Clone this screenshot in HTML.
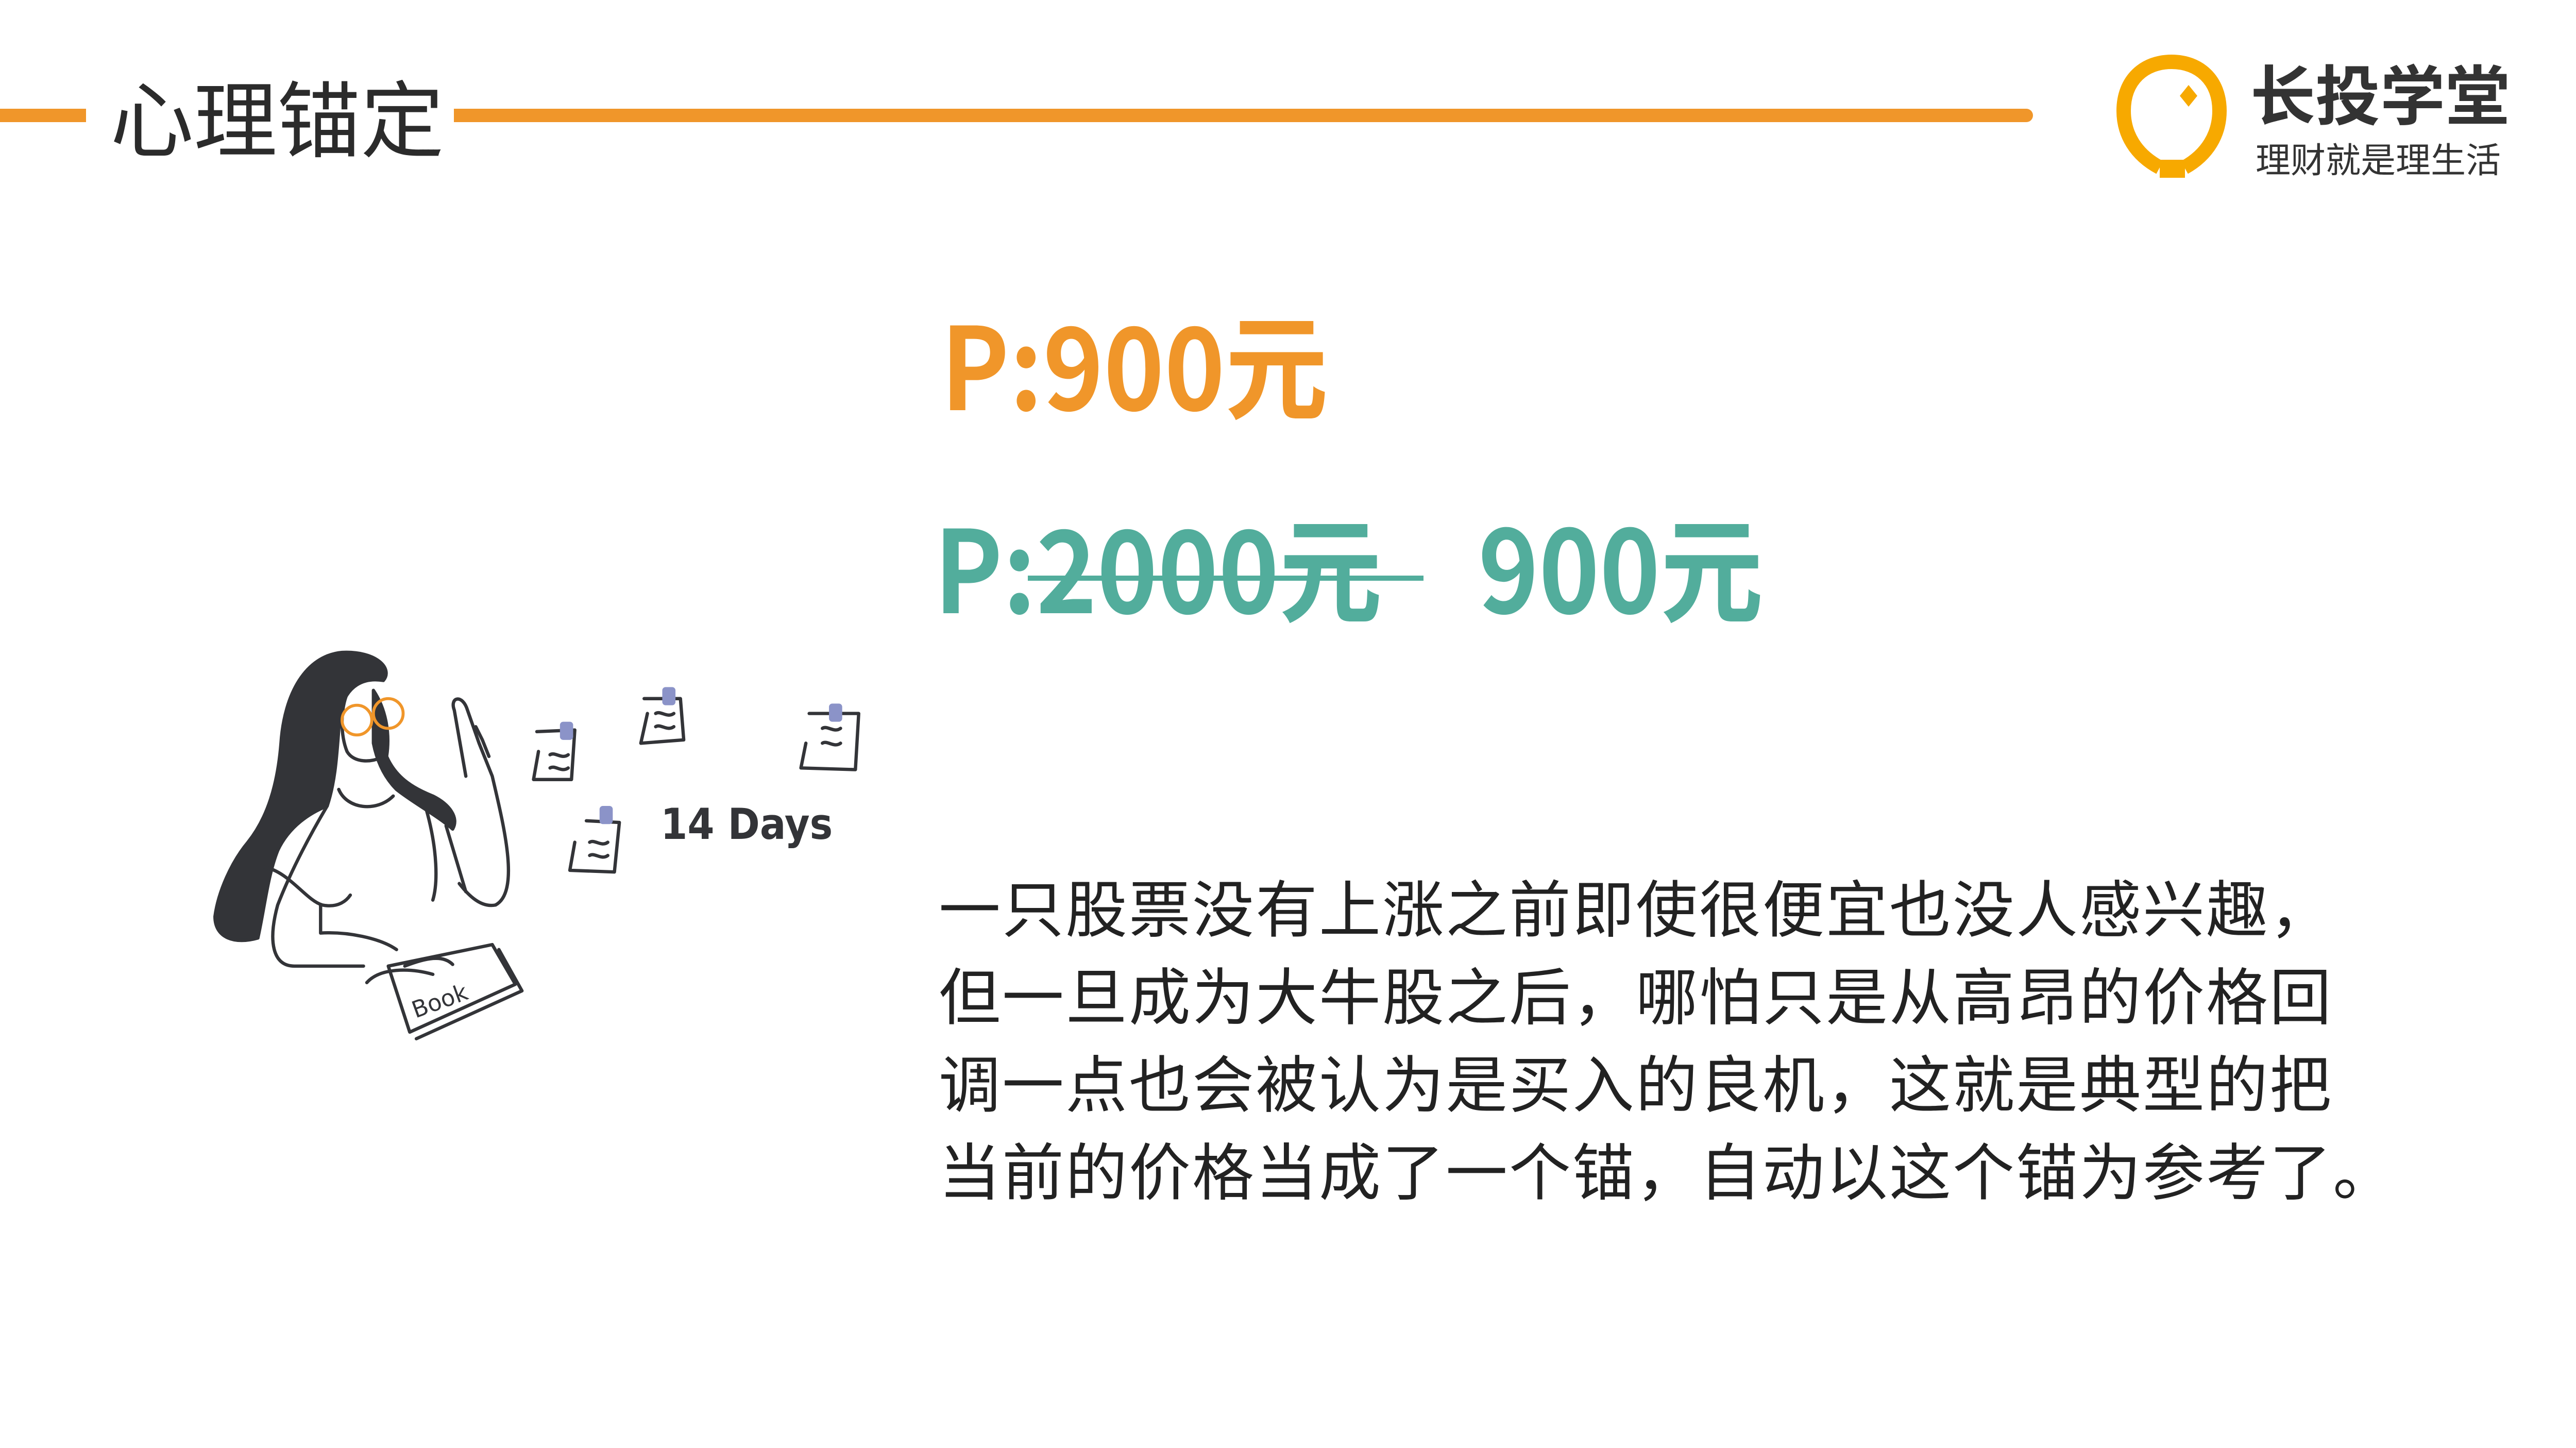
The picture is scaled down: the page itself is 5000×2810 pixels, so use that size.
<!DOCTYPE html>
<html><head><meta charset="utf-8">
<style>
html,body{margin:0;padding:0;background:#fff;}
body{width:5000px;height:2810px;position:relative;overflow:hidden;font-family:"Liberation Sans","Noto Sans CJK SC",sans-serif;}
.abs{position:absolute;white-space:nowrap;}
.bar{position:absolute;background:#f0962a;}
.price{font-size:222px;line-height:260px;font-weight:bold;font-family:'Noto Sans CJK SC',sans-serif;transform:scaleX(0.9);transform-origin:0 0;}
</style></head><body>
<div class="bar" style="left:0;top:211px;width:167px;height:26px;"></div>
<div class="bar" style="left:881px;top:211px;width:3065px;height:26px;border-radius:0 13px 13px 0;"></div>
<div class="abs" style="left:214px;top:124px;font-size:162px;line-height:195px;color:#2b2b2b;font-family:'Noto Sans CJK SC',sans-serif;">心理锚定</div>

<!-- logo -->
<svg class="abs" style="left:4100px;top:100px" width="240" height="250" viewBox="0 0 240 250">
<path d="M92 225 C45 200 22 160 22 115 C22 55 62 20 115 20 C168 20 208 55 208 115 C208 160 185 200 140 225" fill="none" stroke="#f7a900" stroke-width="28"/>
<path d="M92 210 L92 245 L141 245 L141 210 Z" fill="#f7a900"/>
<path d="M148 65 L165 86 L148 107 L131 86 Z" fill="#f7a900"/>
</svg>
<div class="abs" style="left:4368px;top:103px;font-size:126px;line-height:150px;font-weight:bold;color:#333;font-family:'Noto Sans CJK SC',sans-serif;">长投学堂</div>
<div class="abs" style="left:4378px;top:266px;font-size:68px;line-height:80px;color:#333;font-family:'Noto Sans CJK SC',sans-serif;">理财就是理生活</div>

<!-- prices -->
<div class="abs price" style="left:1826px;top:569px;color:#f0962a;">P:900元</div>
<div class="abs price" style="left:1813px;top:963px;color:#52ad9c;">P:2000元</div>
<div class="abs" style="left:1995px;top:1117px;width:768px;height:10px;background:#52ad9c;"></div>
<div class="abs price" style="left:2869px;top:963px;color:#52ad9c;">900元</div>

<!-- paragraph -->
<div class="abs" style="left:1822px;top:1671px;font-size:120px;line-height:170px;color:#222;font-family:'Noto Sans CJK SC',sans-serif;letter-spacing:3px;">一只股票没有上涨之前即使很便宜也没人感兴趣，<br>但一旦成为大牛股之后，哪怕只是从高昂的价格回<br>调一点也会被认为是买入的良机，这就是典型的把<br>当前的价格当成了一个锚，自动以这个锚为参考了。</div>

<!-- illustration -->
<svg class="abs" style="left:385px;top:1218px" width="1346" height="833" viewBox="120 380 420 260">
<g fill="none" stroke="#333438" stroke-width="2" stroke-linecap="round" stroke-linejoin="round">
<path d="M207 395 C185 397 172 420 170 450 C168 475 162 495 150 510 C140 522 132 540 130 555 C130 568 142 572 156 568 C160 550 162 530 168 515 C175 500 188 492 198 488 C204 470 204 450 206 430 C210 415 220 410 232 412 C238 405 228 394 207 395 Z" fill="#333438"/>
<path d="M226 418 C234 430 236 445 234 458 C240 472 252 478 262 482 C272 487 278 495 274 502 C265 494 250 486 240 478 C232 470 228 460 226 450 Z" fill="#333438"/>
<path d="M210 420 C206 430 206 445 210 455 C214 462 225 462 232 458"/>
<circle cx="216" cy="436" r="9" stroke="#f0962a" stroke-width="1.8"/>
<circle cx="235" cy="432" r="9" stroke="#f0962a" stroke-width="1.8"/>
<path d="M205 478 C210 490 228 492 238 482"/>
<path d="M198 488 C185 510 175 530 168 548 C162 570 165 585 178 585 L220 585"/>
<path d="M160 525 C175 528 185 545 195 548 C205 550 210 545 212 542"/>
<path d="M194 548 L194 565 C210 564 230 568 240 575"/>
<path d="M258 490 C265 515 265 535 262 545"/>
<path d="M270 500 L282 540"/>
<path d="M282 470 L275 430 C272 422 280 420 283 430 L290 450 L298 470 C305 500 315 540 300 548 C290 550 282 540 278 535"/>
<path d="M288 440 L292 448 L296 458"/>
<path d="M235 585 L248 625 L312 596 L298 572 Z"/>
<path d="M252 629 L316 600 L302 575"/>
<path d="M245 585 C258 580 268 578 274 584"/>
<path d="M222 595 C230 586 248 586 262 590"/>
<text x="248" y="613" font-family="DejaVu Sans" font-size="14" fill="#333438" stroke="none" transform="rotate(-20 260 605)">Book</text>
<path d="M325 443 L348 442 L346 472 L323 472 L326 455"/>
<path d="M390 423 L412 423 L414 448 L388 450 L392 432"/>
<path d="M490 432 L520 432 L518 466 L485 465 L488 450"/>
<path d="M355 497 L375 498 L372 528 L345 527 L348 510"/>
<path d="M333 457 C336 455 340 460 344 457 M333 465 C336 463 340 468 344 465"/>
<path d="M397 432 C400 430 404 435 408 432 M397 440 C400 438 404 443 408 440"/>
<path d="M498 441 C501 439 505 444 509 441 M498 450 C501 448 505 453 509 450"/>
<path d="M357 510 C360 508 364 513 368 510 M357 518 C360 516 364 521 368 518"/>
</g>
<g fill="#8b93c8">
<rect x="339" y="437" width="8" height="11" rx="2"/>
<rect x="401" y="416" width="8" height="11" rx="2"/>
<rect x="502" y="426" width="8" height="11" rx="2"/>
<rect x="363" y="488" width="8" height="11" rx="2"/>
</g>
<text x="400" y="508" font-family="DejaVu Sans Condensed, DejaVu Sans" font-weight="bold" font-size="26" fill="#333438">14 Days</text>
</svg>
</body></html>
